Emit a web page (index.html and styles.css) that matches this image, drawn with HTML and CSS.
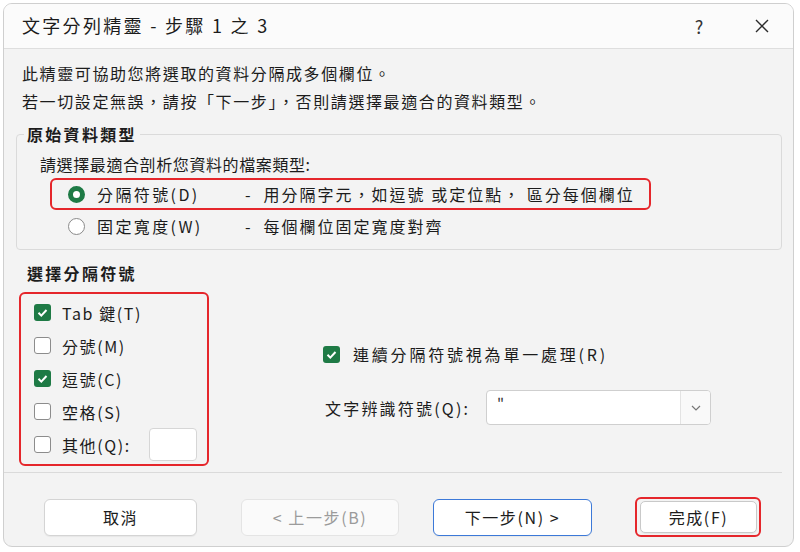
FILE: index.html
```html
<!DOCTYPE html>
<html lang="zh-Hant">
<head>
    <meta charset="UTF-8">
    <meta name="viewport" content="width=device-width, initial-scale=1.0">
    <title>文字分列精靈 - 步驟 1 之 3</title>
    <link rel="stylesheet" href="styles.css">
</head>
<body>

    <div class="dialog">
        <div class="titlebar">
            <span class="title">文字分列精靈 - 步驟 1 之 3</span>
            <span class="help">?</span>
            <span class="close">
                <svg width="16" height="16" viewBox="0 0 16 16"><path d="M2 2L14 14M14 2L2 14" stroke="#2b2b2b" stroke-width="1.4" fill="none"/></svg>
            </span>
        </div>

        <div class="content">
            <p class="intro">此精靈可協助您將選取的資料分隔成多個欄位。<br>若一切設定無誤，請按「下一步」，否則請選擇最適合的資料類型。</p>

            <fieldset class="group">
                <legend>原始資料類型</legend>
                <div class="group-body">
                    <div class="hint">請選擇最適合剖析您資料的檔案類型:</div>
                    <label class="opt marked">
                        <span class="radio on"></span>
                        <span class="opt-name">分隔符號(D)</span>
                        <span class="opt-desc"><span class="dash">-</span>用分隔字元，如逗號 或定位點， 區分每個欄位</span>
                    </label>
                    <label class="opt">
                        <span class="radio"></span>
                        <span class="opt-name">固定寬度(W)</span>
                        <span class="opt-desc"><span class="dash">-</span>每個欄位固定寬度對齊</span>
                    </label>
                </div>
            </fieldset>

            <div class="delims">
                <div class="section-title">選擇分隔符號</div>
                <div class="delim-row">
                    <div class="delim-list marked">
                        <label class="check-row"><span class="check on"><svg width="17" height="17" viewBox="0 0 17 17"><path d="M4.5 8.8l2.8 2.8 5.2-5.6" stroke="#fff" stroke-width="2" fill="none"/></svg></span>Tab 鍵(T)</label>
                        <label class="check-row"><span class="check"></span>分號(M)</label>
                        <label class="check-row"><span class="check on"><svg width="17" height="17" viewBox="0 0 17 17"><path d="M4.5 8.8l2.8 2.8 5.2-5.6" stroke="#fff" stroke-width="2" fill="none"/></svg></span>逗號(C)</label>
                        <label class="check-row"><span class="check"></span>空格(S)</label>
                        <label class="check-row"><span class="check"></span>其他(Q):<span class="other-input"></span></label>
                    </div>
                    <div class="delim-opts">
                        <label class="check-row"><span class="check on"><svg width="17" height="17" viewBox="0 0 17 17"><path d="M4.5 8.8l2.8 2.8 5.2-5.6" stroke="#fff" stroke-width="2" fill="none"/></svg></span>連續分隔符號視為單一處理(R)</label>
                        <div class="qualifier">
                            <span class="qualifier-label">文字辨識符號(Q):</span>
                            <div class="select">
                                <span class="select-value">"</span>
                                <span class="select-arrow">
                                    <svg width="10" height="6" viewBox="0 0 10 6"><path d="M1 1l4 4 4-4" stroke="#777" stroke-width="1.2" fill="none"/></svg>
                                </span>
                            </div>
                        </div>
                    </div>
                </div>
            </div>

            <div class="buttons">
                <button class="btn btn-cancel">取消</button>
                <button class="btn btn-back" disabled>&lt; 上一步(B)</button>
                <button class="btn btn-next">下一步(N) &gt;</button>
                <div class="finish-wrap">
                    <button class="btn btn-finish">完成(F)</button>
                </div>
            </div>
        </div>
    </div>

</body>
</html>
```

FILE: styles.css
```css
body {
    margin: 0;
    background-color: #fff;
    font-family: "Noto Sans CJK TC", "Noto Sans", sans-serif;
    color: #1c1c1c;
}
.dialog {
    margin: 3px;
    width: 789px;
    height: 542px;
    border: 1px solid #cfcfcf;
    border-radius: 9px;
    background-color: #f3f3f3;
    overflow: hidden;
    display: flex;
    flex-direction: column;
}

/* 標題列 */
.titlebar {
    height: 44px;
    flex-shrink: 0;
    background-color: #fbfbfb;
    border-bottom: 1px solid #dedede;
    display: flex;
    align-items: center;
    padding: 0 21px 0 18px;
}
.title {
    flex: 1;
    font-size: 18px;
    letter-spacing: 2.3px;
    margin-top: -2px;
}
.help {
    width: 20px;
    text-align: center;
    font-size: 18px;
    color: #333;
    margin-right: 43px;
}
.close {
    width: 20px;
    height: 16px;
    display: flex;
    justify-content: center;
}

.content {
    flex: 1;
    display: flex;
    flex-direction: column;
}
.intro {
    margin: 10px 0 0 18px;
    font-size: 16px;
    letter-spacing: 1.6px;
    line-height: 28px;
}

/* 原始資料類型 */
.group {
    margin: 9px 11px 0 12px;
    border: 1px solid #dadada;
    border-radius: 4px;
    padding: 0 7px 7px;
    min-width: 0;
}
.group legend {
    font-size: 16px;
    font-weight: bold;
    letter-spacing: 2.3px;
    line-height: 20px;
    padding: 0 3px;
}
.group-body {
    margin-left: 16px;
}
.hint {
    margin-top: 8px;
    font-size: 16px;
    letter-spacing: 0.6px;
    line-height: 24px;
    margin-bottom: 2px;
}
.opt {
    box-sizing: border-box;
    width: 601px;
    height: 32px;
    margin-left: 10px;
    padding-left: 16px;
    border: 2px solid transparent;
    border-radius: 6px;
    display: flex;
    align-items: center;
    font-size: 16px;
    letter-spacing: 2px;
}
.marked {
    border: 2px solid #e5262b;
}
.radio {
    box-sizing: border-box;
    width: 17px;
    height: 17px;
    border-radius: 50%;
    border: 1px solid #8a8a8a;
    background-color: #fff;
    margin-right: 12px;
    flex-shrink: 0;
}
.radio.on {
    border: 5px solid #1e7a45;
}
.opt-name {
    width: 148px;
    letter-spacing: 2.4px;
}
.dash {
    margin-right: 11px;
}

/* 選擇分隔符號 */
.delims {
    margin-right: 11px;
    padding: 11px 0 6px 15px;
    border-bottom: 1px solid #dadada;
}
.section-title {
    margin-left: 8px;
    font-size: 16px;
    font-weight: bold;
    letter-spacing: 2.3px;
    line-height: 24px;
    margin-bottom: 7px;
}
.delim-row {
    display: flex;
    align-items: flex-start;
}
.delim-list {
    box-sizing: border-box;
    width: 190px;
    padding: 2px 0 3px 13px;
    border-radius: 6px;
}
.check-row {
    display: flex;
    align-items: center;
    height: 33px;
    font-size: 16px;
    letter-spacing: 1.6px;
}
.check {
    box-sizing: border-box;
    width: 17px;
    height: 17px;
    border: 1px solid #8c8c8c;
    border-radius: 3px;
    background-color: #fff;
    margin-right: 11px;
    flex-shrink: 0;
    display: flex;
}
.check.on {
    border: none;
    background-color: #1e7a45;
}
.other-input {
    box-sizing: border-box;
    width: 48px;
    height: 33px;
    margin-left: 18px;
    background-color: #fff;
    border: 1px solid #d6d6d6;
    border-radius: 4px;
}
.delim-opts {
    margin-left: 114px;
    padding-top: 50px;
}
.delim-opts .check-row {
    height: 24px;
    letter-spacing: 2.8px;
}
.delim-opts .check {
    margin-right: 13px;
}
.qualifier {
    margin-top: 24px;
    display: flex;
    align-items: center;
}
.qualifier-label {
    width: 161px;
    margin-left: 2px;
    font-size: 16px;
    letter-spacing: 2.2px;
}
.select {
    box-sizing: border-box;
    width: 225px;
    height: 35px;
    background-color: #fff;
    border: 1px solid #cfcfcf;
    border-radius: 4px;
    display: flex;
    overflow: hidden;
}
.select-value {
    flex: 1;
    padding: 3px 0 0 10px;
    font-size: 15px;
    line-height: 22px;
    color: #333;
}
.select-arrow {
    width: 29px;
    border-left: 1px solid #e3e3e3;
    background-color: #f9f9f9;
    display: flex;
    align-items: center;
    justify-content: center;
}

/* 按鈕 */
.buttons {
    display: flex;
    align-items: center;
    padding: 24px 0 0 40px;
}
.btn {
    box-sizing: border-box;
    height: 37px;
    font-family: inherit;
    font-size: 16px;
    letter-spacing: 1.6px;
    color: #1c1c1c;
    background-color: #fff;
    border: 1px solid #d4d4d4;
    border-radius: 6px;
    box-shadow: 0 1px 1px rgba(0, 0, 0, 0.05);
}
.btn-cancel {
    width: 153px;
}
.btn-back {
    width: 158px;
    margin-left: 44px;
    color: #9b9b9b;
    background-color: #fafafa;
    border-color: #e4e4e4;
    box-shadow: none;
}
.btn-next {
    width: 159px;
    margin-left: 34px;
    border: 1.5px solid #3c79d8;
}
.finish-wrap {
    box-sizing: border-box;
    width: 126px;
    height: 40px;
    margin-left: 43px;
    padding: 2px 2px 2px 3px;
    border: 2px solid #e5262b;
    border-radius: 6px;
}
.btn-finish {
    width: 100%;
    height: 32px;
    border-color: #c9c9c9;
    border-radius: 5px;
}
```
